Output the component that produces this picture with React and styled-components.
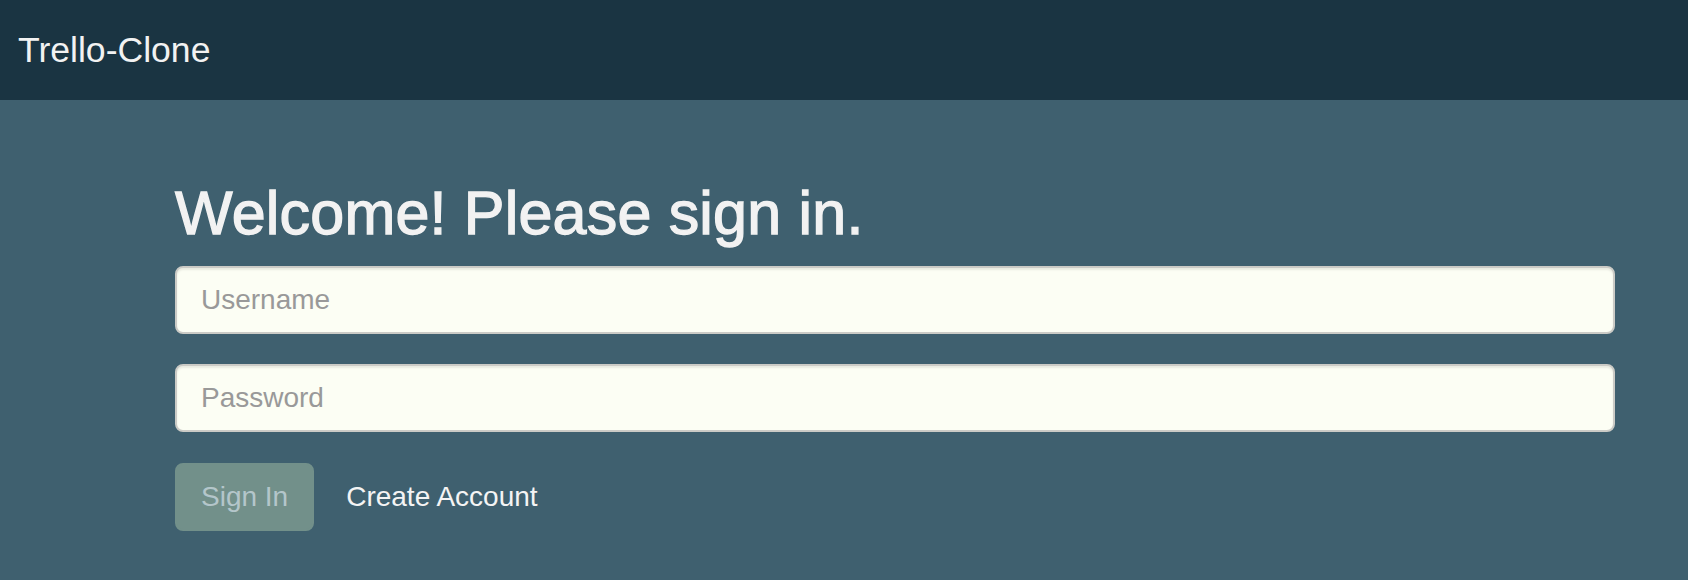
import React from "react";
import styled, { createGlobalStyle } from "styled-components";

const GlobalStyle = createGlobalStyle`
	html, body {
		margin: 0;
		padding: 0;
		background: #3f606f;
		font-family: "Liberation Sans", Arial, Helvetica, sans-serif;
	}
	#root {
		min-height: 100vh;
	}
`;

const App = () => {
	return (
		<>
			<GlobalStyle />
			<Navbar>
				<Brand>Trello-Clone</Brand>
			</Navbar>
			<Main>
				<Heading>Welcome! Please sign in.</Heading>
				<Form onSubmit={(e) => e.preventDefault()}>
					<Field>
						<Input type="text" placeholder="Username" />
					</Field>
					<Field>
						<Input type="password" placeholder="Password" />
					</Field>
					<Actions>
						<SignIn type="submit" disabled>
							Sign In
						</SignIn>
						<LinkButton href="#">Create Account</LinkButton>
					</Actions>
				</Form>
			</Main>
		</>
	);
};

export default App;

const Navbar = styled.header`
	height: 100px;
	background: #1a3442;
	display: flex;
	align-items: center;
	padding: 0 18px;
	box-sizing: border-box;
`;

const Brand = styled.div`
	color: #f2f2f2;
	font-size: 35.6px;
	line-height: 40px;
`;

const Main = styled.main`
	padding: 80px 73px 40px 175px;
`;

const Heading = styled.h2`
	margin: 0 0 20px;
	color: #f2f2f2;
	font-size: 61px;
	font-weight: 500;
	line-height: 66px;
	-webkit-text-stroke: 1.3px #f2f2f2;
	letter-spacing: 0.2px;
`;

const Form = styled.form`
	display: flex;
	flex-direction: column;
`;

const Field = styled.div`
	margin-bottom: 30px;
`;

const Input = styled.input`
	display: block;
	width: 100%;
	height: 68px;
	box-sizing: border-box;
	padding: 12px 24px;
	font-family: "Liberation Sans", Arial, sans-serif;
	font-size: 28px;
	color: #555;
	background: #fcfef4;
	border: 2px solid #cbcbc6;
	border-radius: 8px;
	box-shadow: inset 0 2px 2px rgba(0, 0, 0, 0.075);
	outline: none;
	&::placeholder {
		color: #999;
	}
`;

const Actions = styled.div`
	display: flex;
	align-items: center;
	margin-top: 1px;
`;

const SignIn = styled.button`
	height: 68px;
	padding: 12px 24px;
	box-sizing: border-box;
	font-family: "Liberation Sans", Arial, sans-serif;
	font-size: 28px;
	color: #b4c6ca;
	background: #72908a;
	border: 2px solid #72908a;
	border-radius: 8px;
	cursor: not-allowed;
`;

const LinkButton = styled.a`
	margin-left: 8px;
	padding: 12px 24px;
	font-size: 28px;
	color: #f4f4f4;
	text-decoration: none;
`;
